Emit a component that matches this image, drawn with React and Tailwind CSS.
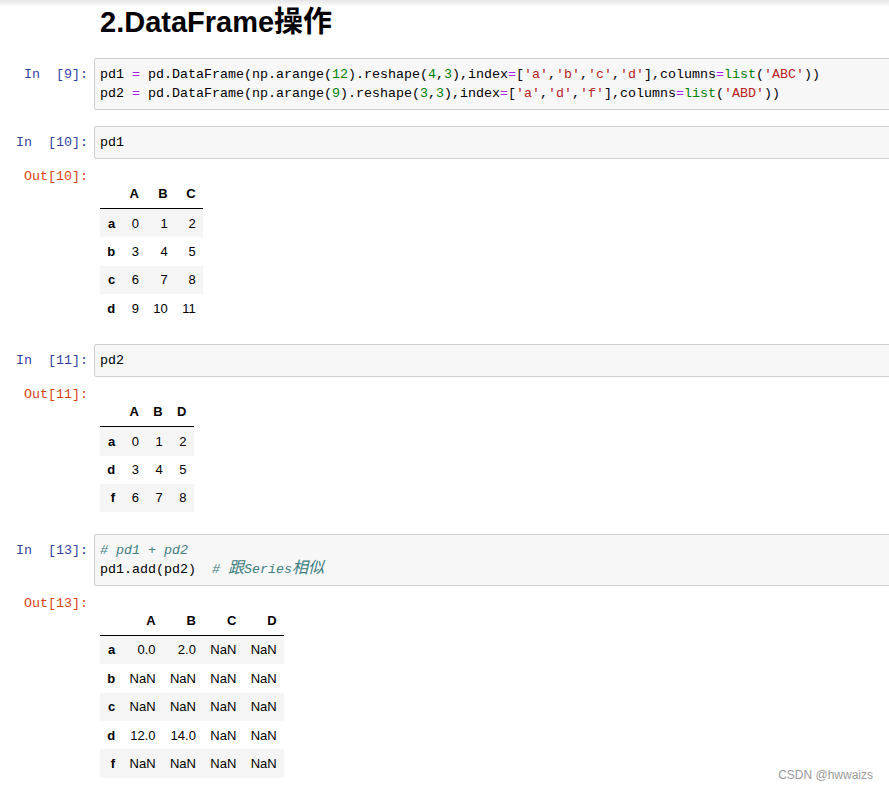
import React from "react";

const mono = "font-['Liberation_Mono','Noto_Sans_CJK_SC',monospace] text-[13.33px]";

// code tokens
const O = ({ children }) => <span className="text-[#aa22ff]">{children}</span>;
const N = ({ children }) => <span className="text-[#008000]">{children}</span>;
const S = ({ children }) => <span className="text-[#ba2121]">{children}</span>;
const C = ({ children }) => <span className="text-[#408080] italic">{children}</span>;
const Wide = ({ children }) => <span className="text-[16px] leading-[19px]">{children}</span>;

function Prompt({ label, out }) {
  return (
    <div
      className={`w-[88px] shrink-0 text-right whitespace-pre leading-[19px] ${mono} ${
        out ? "text-[#d84315]" : "text-[#303f9f] pt-[7px]"
      }`}
    >
      {label}
    </div>
  );
}

function CodeCell({ label, children }) {
  return (
    <div className="flex w-[900px]">
      <Prompt label={label} />
      <div
        className={`ml-[6px] flex-1 bg-[#f7f7f7] border border-[#cfcfcf] rounded-[2px] px-[5px] py-[6px] leading-[19px] whitespace-pre text-black ${mono}`}
      >
        {children}
      </div>
    </div>
  );
}

function DataTable({ cols, rows }) {
  return (
    <table className="font-['Liberation_Sans',Arial,sans-serif] text-[13px] text-black">
      <thead>
        <tr className="border-b border-black">
          <th className="px-[7.2px] py-[6.5px] leading-[15.4px]"></th>
          {cols.map((c) => (
            <th key={c} className="px-[7.2px] py-[6.5px] leading-[15.4px] text-right font-bold">
              {c}
            </th>
          ))}
        </tr>
      </thead>
      <tbody>
        {rows.map((r, i) => (
          <tr key={r[0]} className={i % 2 === 0 ? "bg-[#f5f5f5]" : ""}>
            <th className="px-[7.2px] py-[6.5px] leading-[15.4px] text-right font-bold">{r[0]}</th>
            {r.slice(1).map((v, j) => (
              <td key={j} className="px-[7.2px] py-[6.5px] leading-[15.4px] text-right">
                {v}
              </td>
            ))}
          </tr>
        ))}
      </tbody>
    </table>
  );
}

function Output({ label, children }) {
  return (
    <div className="flex pt-[8px] pb-[21.5px]">
      <Prompt label={label} out />
      <div className="ml-[6px] pl-[6px] pt-[12.6px]">{children}</div>
    </div>
  );
}

export default function App() {
  return (
    <div className="relative w-[889px] h-[790px] overflow-hidden bg-[linear-gradient(to_bottom,#e6e6e6,#ffffff_7px)]">
      {/* heading */}
      <div className="pl-[100px] pt-[5px] mb-[19px] leading-[34px] text-[29px] font-bold text-black font-['Liberation_Sans','Noto_Sans_CJK_SC',sans-serif]">
        2.DataFrame操作
      </div>

      <CodeCell label="In  [9]:">
        <div>
          pd1 <O>=</O> pd.DataFrame(np.arange(<N>12</N>).reshape(<N>4</N>,<N>3</N>),index<O>=</O>[
          <S>'a'</S>,<S>'b'</S>,<S>'c'</S>,<S>'d'</S>],columns<O>=</O>
          <N>list</N>(<S>'ABC'</S>))
        </div>
        <div>
          pd2 <O>=</O> pd.DataFrame(np.arange(<N>9</N>).reshape(<N>3</N>,<N>3</N>),index<O>=</O>[
          <S>'a'</S>,<S>'d'</S>,<S>'f'</S>],columns<O>=</O>
          <N>list</N>(<S>'ABD'</S>))
        </div>
      </CodeCell>

      <div className="h-[16px]" />

      <CodeCell label="In  [10]:">pd1</CodeCell>
      <Output label="Out[10]:">
        <DataTable
          cols={["A", "B", "C"]}
          rows={[
            ["a", 0, 1, 2],
            ["b", 3, 4, 5],
            ["c", 6, 7, 8],
            ["d", 9, 10, 11],
          ]}
        />
      </Output>

      <CodeCell label="In  [11]:">pd2</CodeCell>
      <Output label="Out[11]:">
        <DataTable
          cols={["A", "B", "D"]}
          rows={[
            ["a", 0, 1, 2],
            ["d", 3, 4, 5],
            ["f", 6, 7, 8],
          ]}
        />
      </Output>

      <CodeCell label="In  [13]:">
        <div>
          <C># pd1 + pd2</C>
        </div>
        <div>
          pd1.add(pd2)  <C>
            # <Wide>跟</Wide>Series<Wide>相似</Wide>
          </C>
        </div>
      </CodeCell>
      <Output label="Out[13]:">
        <DataTable
          cols={["A", "B", "C", "D"]}
          rows={[
            ["a", "0.0", "2.0", "NaN", "NaN"],
            ["b", "NaN", "NaN", "NaN", "NaN"],
            ["c", "NaN", "NaN", "NaN", "NaN"],
            ["d", "12.0", "14.0", "NaN", "NaN"],
            ["f", "NaN", "NaN", "NaN", "NaN"],
          ]}
        />
      </Output>

      {/* watermark */}
      <div className="absolute right-[16px] top-[768px] text-[12px] leading-[15px] text-[#9a9a9a] font-['Liberation_Sans',Arial,sans-serif]">
        CSDN @hwwaizs
      </div>
    </div>
  );
}
